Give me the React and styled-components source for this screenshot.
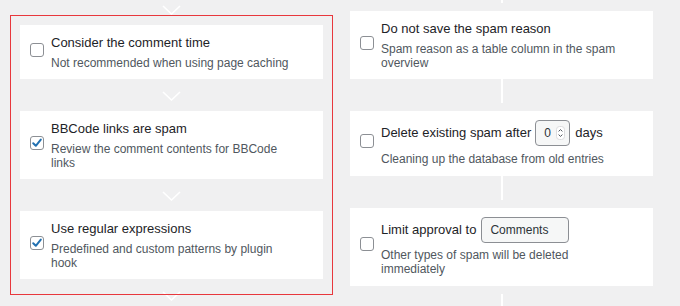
import styled, { createGlobalStyle } from "styled-components";

const GlobalStyle = createGlobalStyle`
  html, body {
    margin: 0;
    padding: 0;
    background: #f0f0f1;
  }
  body {
    font-family: "Liberation Sans", Arial, sans-serif;
  }
`;

const Page = styled.div`
  display: grid;
  grid-template-columns: 303px 303px;
  column-gap: 27px;
  padding-left: 20px;
  width: 680px;
  height: 306px;
  overflow: hidden;
  box-sizing: border-box;
`;

const Column = styled.div`
  position: relative;
  display: flex;
  flex-direction: column;
`;

const Highlight = styled.div`
  position: absolute;
  top: 15px;
  left: -10px;
  width: 323px;
  height: 280px;
  box-sizing: border-box;
  border: 1px solid #e8383d;
  pointer-events: none;
`;

const Connector = styled.div`
  height: ${(p) => p.$h || 32}px;
  flex: none;
  display: flex;
  justify-content: center;
  align-items: flex-end;
  box-sizing: border-box;
  padding: ${(p) => (p.$line ? "0 0 8px" : "0 0 10px")};
  ${(p) => p.$last && "padding-top: 8px; padding-bottom: 0; align-items: stretch;"}
`;

const Line = styled.div`
  width: 2px;
  height: 100%;
  background: #ffffff;
`;

const Chevron = () => (
  <svg width="19" height="10" viewBox="0 0 19 10" fill="none">
    <polyline points="1,1 9.5,9 18,1" stroke="#fff" strokeWidth="1.6" />
  </svg>
);

const Card = styled.div`
  flex: none;
  background: #ffffff;
  display: flex;
  align-items: center;
  gap: 7px;
  padding: ${(p) => (p.$field ? "9px 24px 10px 10px" : "9px 24px 9px 10px")};
`;

const Box = styled.span`
  flex: none;
  width: 14px;
  height: 14px;
  box-sizing: border-box;
  border: 1px solid #8c8f94;
  border-radius: 3px;
  background: #fff;
  margin-bottom: 5px;
  display: flex;
  align-items: center;
  justify-content: center;
`;

const Texts = styled.div`
  display: flex;
  flex-direction: column;
  min-width: 0;
`;

const Title = styled.div`
  display: flex;
  align-items: center;
  font-size: 13px;
  line-height: 18px;
  color: #1d2327;
  white-space: nowrap;
  min-height: ${(p) => (p.$field ? "26px" : "18px")};
`;

const Desc = styled.div`
  margin-top: ${(p) => p.$gap || 4}px;
  font-size: 12px;
  line-height: 14px;
  color: #50575e;
`;

const NumberField = styled.span`
  width: 35px;
  height: 26px;
  margin: 0 5px 0 4px;
  box-sizing: border-box;
  border: 1px solid #8c8f94;
  border-radius: 4px;
  background: #f6f7f7;
  display: flex;
  align-items: center;
  justify-content: space-between;
  padding: 0 4px 0 8px;
  color: #2c3338;
  font-size: 12px;
`;

const TextField = styled.span`
  width: 88px;
  height: 26px;
  margin-left: 5px;
  box-sizing: border-box;
  border: 1px solid #8c8f94;
  border-radius: 4px;
  background: #f6f7f7;
  display: flex;
  align-items: center;
  padding: 0 8px;
  color: #2c3338;
  font-size: 12px;
`;

const Check = () => (
  <svg width="12" height="12" viewBox="0 0 12 12" fill="none">
    <polyline points="2.2,6.2 4.8,8.8 9.8,2.6" stroke="#2271b1" strokeWidth="2" strokeLinecap="round" strokeLinejoin="round" />
  </svg>
);

const Spinner = () => (
  <svg width="9" height="14" viewBox="0 0 9 14" fill="none">
    <rect x="0.5" y="0.5" width="8" height="13" rx="3" fill="#fff" stroke="#dcdcde" />
    <polyline points="2.6,5.4 4.5,3.6 6.4,5.4" stroke="#50575e" strokeWidth="1" />
    <polyline points="2.6,8.6 4.5,10.4 6.4,8.6" stroke="#50575e" strokeWidth="1" />
  </svg>
);

const Option = ({ checked, title, desc, field, gap }) => (
  <Card $field={!!field}>
    <Box>{checked && <Check />}</Box>
    <Texts>
      <Title $field={!!field}>{title}</Title>
      <Desc $gap={gap}>{desc}</Desc>
    </Texts>
  </Card>
);

export default function App() {
  return (
    <>
      <GlobalStyle />
      <Page>
        <Column>
          <Connector $h={25}>
            <Chevron />
          </Connector>
          <Option title="Consider the comment time" desc="Not recommended when using page caching" />
          <Connector>
            <Chevron />
          </Connector>
          <Option
            checked
            title="BBCode links are spam"
            desc="Review the comment contents for BBCode links"
          />
          <Connector>
            <Chevron />
          </Connector>
          <Option
            checked
            title="Use regular expressions"
            desc="Predefined and custom patterns by plugin hook"
          />
          <Connector>
            <Chevron />
          </Connector>
          <Highlight />
        </Column>
        <Column>
          <Connector $h={11} $line>
            <Line />
          </Connector>
          <Option
            title="Do not save the spam reason"
            desc="Spam reason as a table column in the spam overview"
          />
          <Connector $line>
            <Line />
          </Connector>
          <Option
            field
            gap={6}
            title={
              <>
                Delete existing spam after
                <NumberField>
                  0
                  <Spinner />
                </NumberField>
                days
              </>
            }
            desc="Cleaning up the database from old entries"
          />
          <Connector $line>
            <Line />
          </Connector>
          <Option
            field
            gap={5}
            title={
              <>
                Limit approval to
                <TextField>Comments</TextField>
              </>
            }
            desc="Other types of spam will be deleted immediately"
          />
          <Connector $line $last>
            <Line />
          </Connector>
        </Column>
      </Page>
    </>
  );
}
